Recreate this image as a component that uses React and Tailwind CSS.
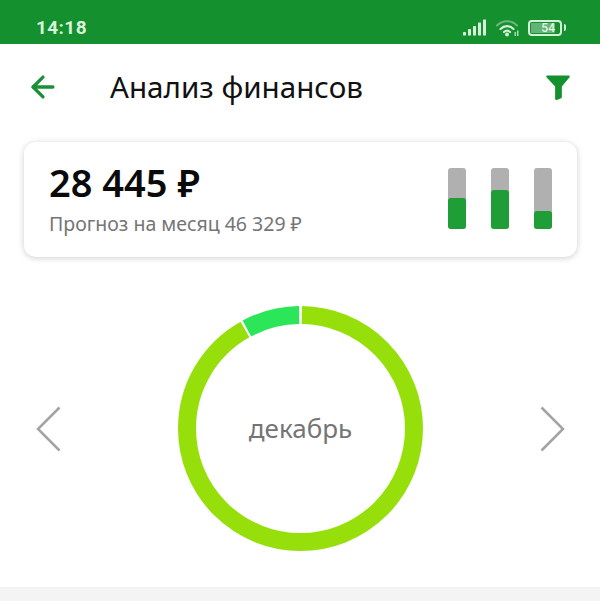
import { ArrowLeft } from "lucide-react";

const bars = [
  { id: 1, fill: "h-[31px]" },
  { id: 2, fill: "h-[39px]" },
  { id: 3, fill: "h-[18px]" },
];

const StatusIcons = () => (
  <div className="flex items-center">
    <svg width="23" height="17" viewBox="0 0 23 17" fill="#d5f0d8">
      <rect x="0" y="13" width="3" height="3.5" rx="0.5" />
      <rect x="5" y="10" width="3" height="6.5" rx="0.5" />
      <rect x="10" y="7" width="3" height="9.5" rx="0.5" />
      <rect x="15" y="3.5" width="3" height="13" rx="0.5" />
      <rect x="20" y="0.5" width="3" height="16" rx="0.5" />
    </svg>
    <svg className="ml-[10px]" width="24" height="18" viewBox="0 0 24 18" fill="none" strokeLinecap="round">
      <path d="M1 6.5C6.5 0.8 15.5 0.8 21 6.5" stroke="#6db97c" strokeWidth="2" />
      <path d="M4.5 10C8.2 6.2 13.8 6.2 17.5 10" stroke="#d5f0d8" strokeWidth="2.2" />
      <path d="M8 13C9.8 11.4 12.2 11.4 14 13" stroke="#d5f0d8" strokeWidth="2.2" />
      <circle cx="11" cy="15.5" r="2" fill="#d5f0d8" />
      <rect x="18.5" y="13" width="1.5" height="4" fill="#a9dcb2" />
      <rect x="21" y="11.5" width="1.5" height="5.5" fill="#a9dcb2" />
    </svg>
    <div className="ml-[8px] flex items-center">
      <div className="flex h-[16px] w-[34px] items-center rounded-[4px] border-2 border-[#d5f0d8] p-[1px]">
        <div className="flex h-full w-[24px] items-center justify-end rounded-[1px] bg-[#62b374] font-['Roboto',sans-serif] text-[12px] leading-none font-medium text-[#e6f6e8]">
          54
        </div>
      </div>
      <div className="ml-[2px] h-[7px] w-[2px] rounded-r-sm bg-[#d5f0d8]" />
    </div>
  </div>
);

export default function App() {
  return (
    <div className="flex h-[601px] w-[600px] flex-col overflow-hidden bg-white font-['Noto_Sans',sans-serif]">
      <div className="flex h-[44px] shrink-0 items-center justify-between bg-[#14902e] pt-[11px] pr-[34px] pl-[36px]">
        <span className="mt-[1px] font-['Roboto',sans-serif] text-[19px] font-bold tracking-[0.4px] text-[#d9f2dc]">14:18</span>
        <StatusIcons />
      </div>

      <div className="flex h-[86px] shrink-0 items-center pr-[29px] pl-[26px]">
        <ArrowLeft size={34} strokeWidth={2.3} className="text-[#1a8f36]" />
        <h1 className="ml-[50px] flex-1 text-[29.6px] leading-none font-normal text-[#111111]">Анализ финансов</h1>
        <svg className="mt-[1px]" width="26" height="25" viewBox="0 0 26 26" fill="#14902e">
          <path d="M2 0.5H24C25 0.5 25.6 1.4 25 2.3L17 12V23C17 23.6 16.6 24 16.2 24.3L11.8 26C10.8 26.3 10 25.7 10 24.8V12L1 2.3C0.4 1.4 1 0.5 2 0.5Z" />
        </svg>
      </div>

      <div className="mt-[12px] ml-[24px] flex h-[115px] w-[553px] shrink-0 items-center justify-between rounded-[12px] bg-white pr-[25px] pl-[25px] shadow-[0_1px_6px_rgba(0,0,0,0.2)]">
        <div className="mb-[4px]">
          <div className="text-[38px] leading-[44px] font-semibold text-[#0a0a0a]">28 445 ₽</div>
          <div className="mt-[8px] text-[19.5px] leading-[24px] text-[#757575]">Прогноз на месяц 46 329 ₽</div>
        </div>
        <div className="-mt-[2px] flex gap-[25px]">
          {bars.map((bar) => (
            <div key={bar.id} className="flex h-[61px] w-[18px] flex-col justify-end rounded-[3px] bg-[#b0b0b0]">
              <div className={`${bar.fill} rounded-[3px] bg-[#1f9e37]`} />
            </div>
          ))}
        </div>
      </div>

      <div className="mt-[49px] flex shrink-0 items-center justify-between pr-[35px] pl-[36px]">
        <svg width="25" height="46" viewBox="0 0 25 46" fill="none" stroke="#a3a3a3" strokeWidth="2.5">
          <path d="M23.5 1.5L2 23L23.5 44.5" />
        </svg>
        <div className="relative h-[245px] w-[245px]">
          <svg width="245" height="245" viewBox="0 0 245 245" fill="none" className="-rotate-90">
            <circle cx="122.5" cy="122.5" r="113.5" stroke="#96df0a" strokeWidth="18" pathLength="360" strokeDasharray="330 30" strokeDashoffset="-0.7" />
            <circle cx="122.5" cy="122.5" r="113.5" stroke="#2ce65a" strokeWidth="18" pathLength="360" strokeDasharray="27.5 332.5" strokeDashoffset="-331.8" />
          </svg>
          <div className="absolute inset-0 flex items-center justify-center text-[26px] text-[#757575]">декабрь</div>
        </div>
        <svg width="25" height="46" viewBox="0 0 25 46" fill="none" stroke="#a3a3a3" strokeWidth="2.5">
          <path d="M1.5 1.5L23 23L1.5 44.5" />
        </svg>
      </div>

      <div className="mt-[36px] flex-1 bg-[#f4f4f4]" />
    </div>
  );
}
